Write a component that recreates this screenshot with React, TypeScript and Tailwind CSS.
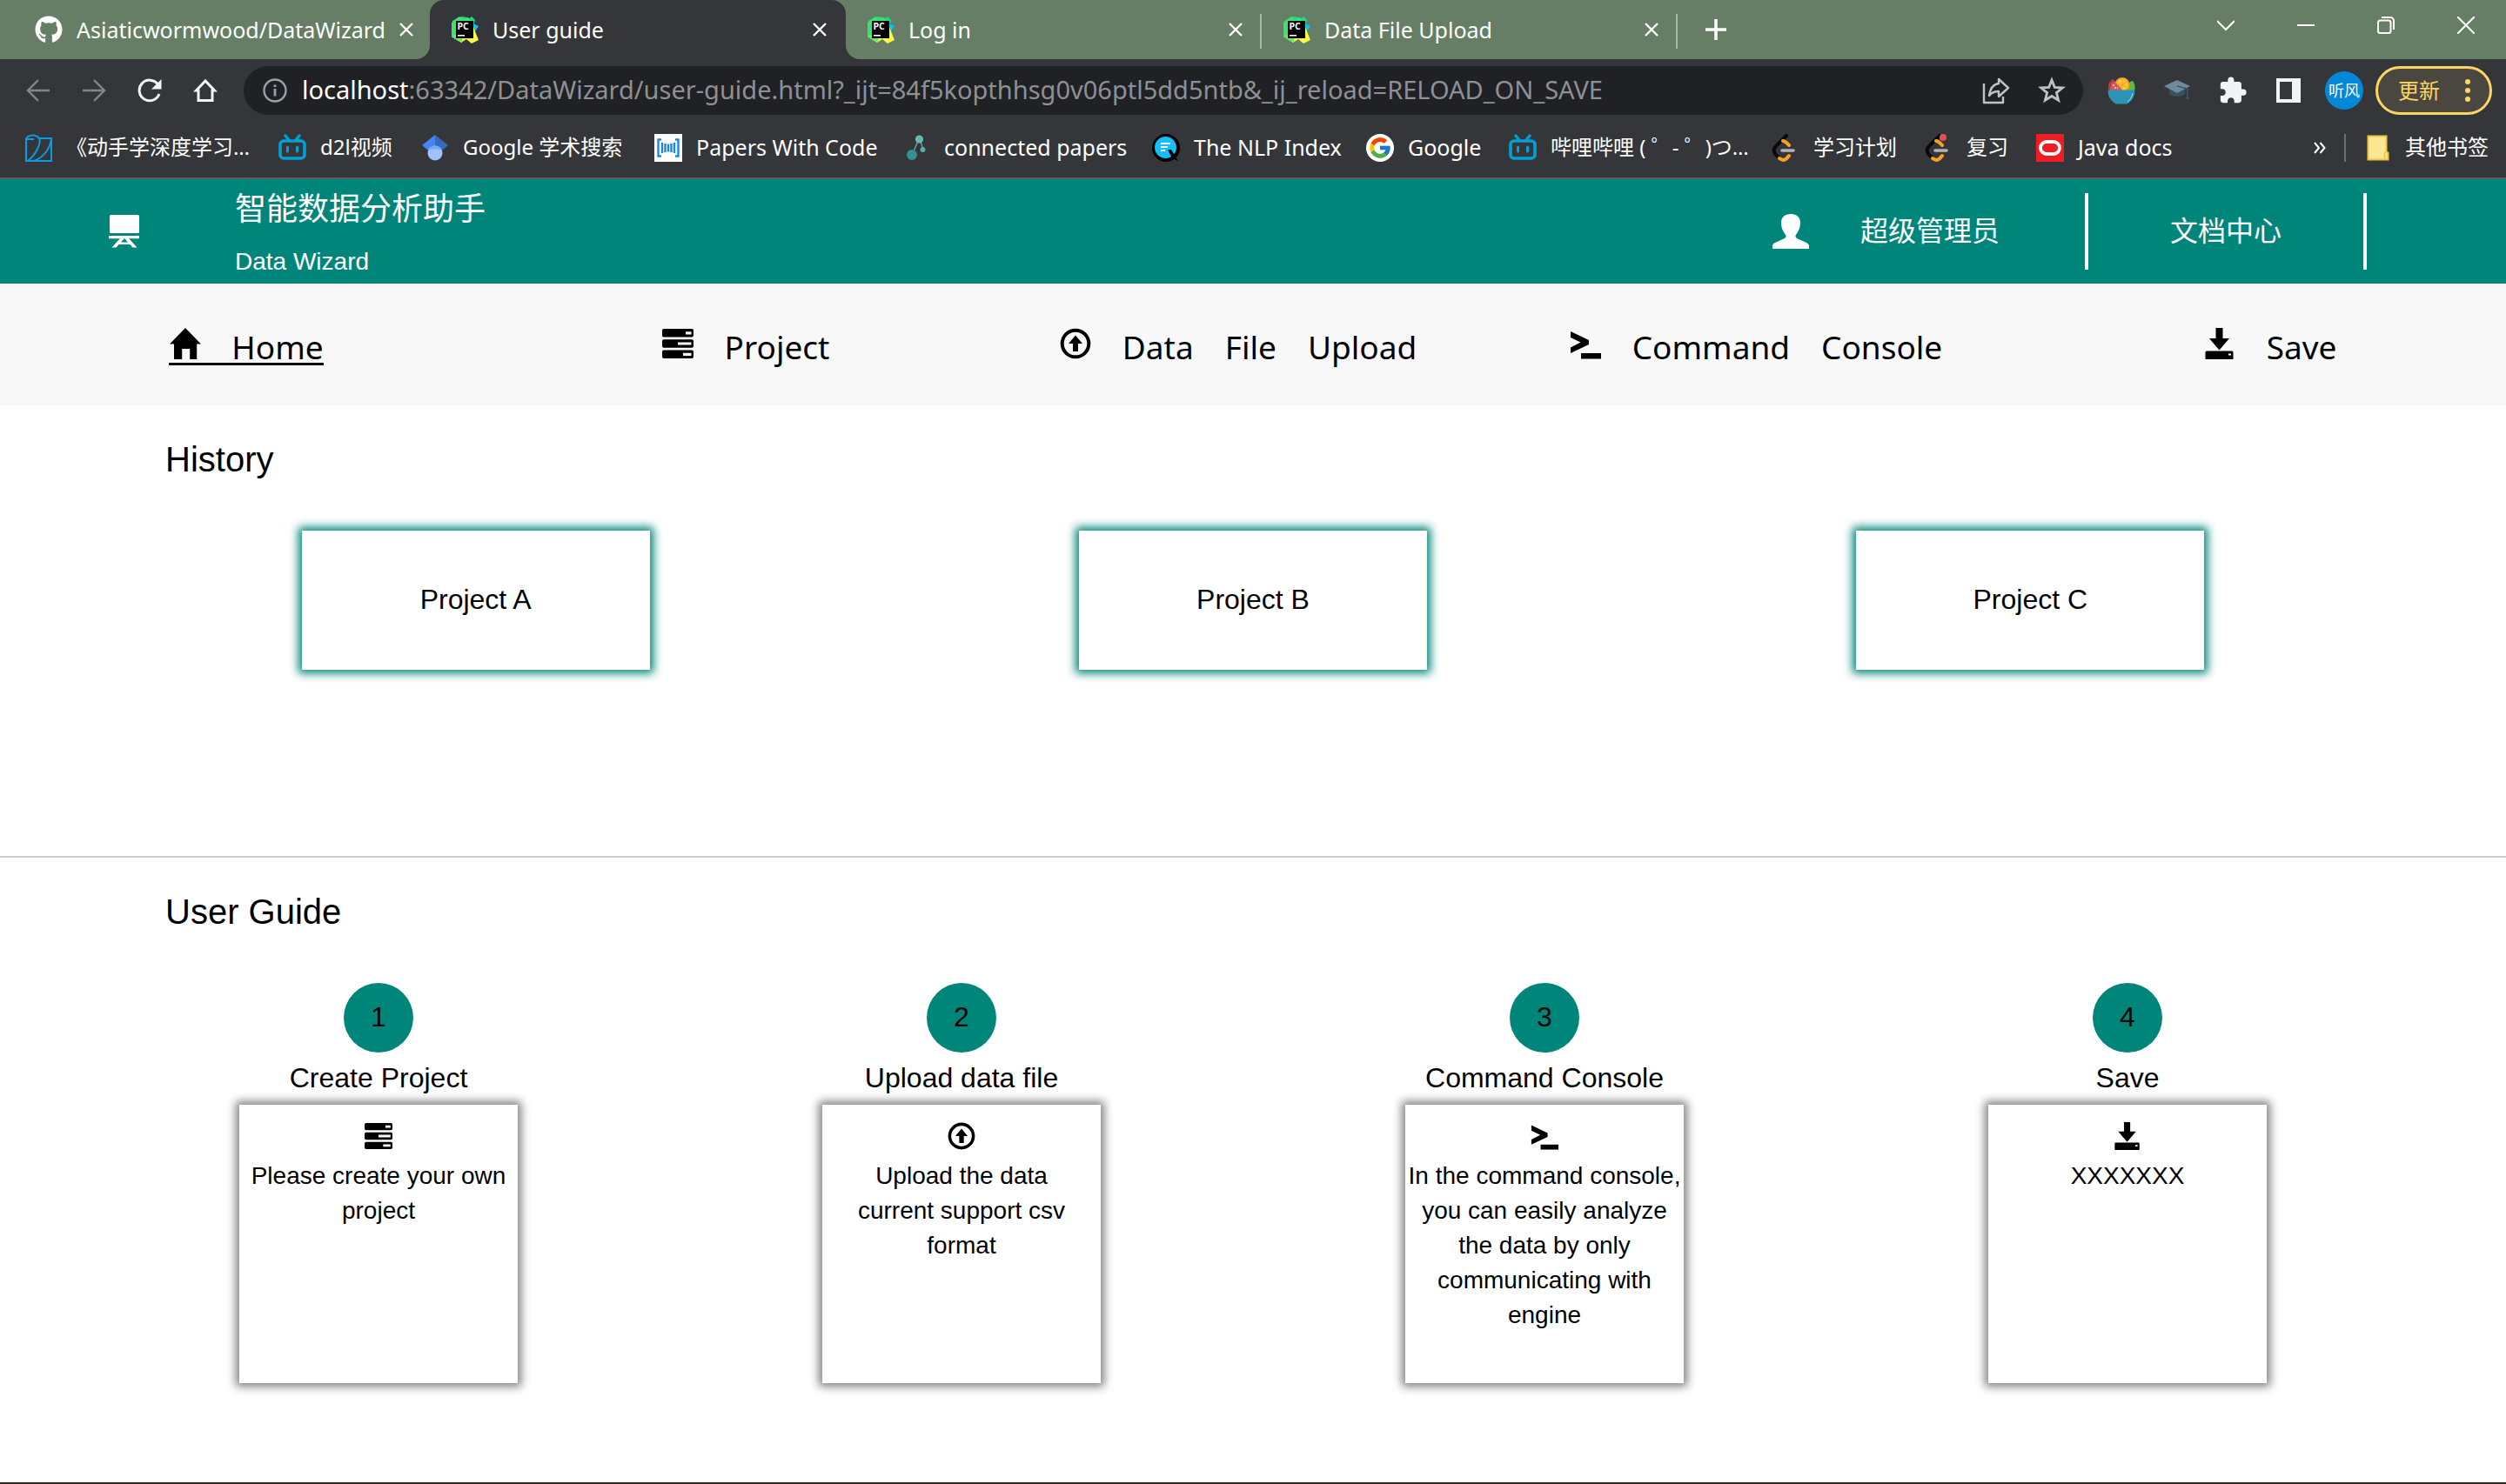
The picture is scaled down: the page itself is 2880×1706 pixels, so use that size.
import type { ReactNode } from "react";
import { FaGithub } from "react-icons/fa";
import { FcGoogle } from "react-icons/fc";
import { MdExtension } from "react-icons/md";

/* ---------- browser icons ---------- */

function PyCharmIcon() {
  return (
    <svg viewBox="0 0 32 32" className="size-8 flex-none" aria-hidden="true">
      <path d="M2 6 9 2l5-1 8 2 2-2 4 4-2 6H8L5 28 1 22z" fill="#21d789" />
      <path d="M1 8 10 1l5 3 5-2 3 4-14 3-3 17-5-1z" fill="#3be26f" />
      <path d="M26 9l6 3-4 6-2-1z" fill="#07c3f2" />
      <path d="M26 13l6 15-8 4-6-5-6 4-7-5 2-4h19z" fill="#fcf84a" />
      <path d="M4 22h10l-1 8-5-1-6-5z" fill="#6bea5b" />
      <path d="M6 6h20v20H6z" fill="#000" />
      <path d="M8 22h8v1.6H8z" fill="#fff" />
      <text x="7.4" y="15.6" fontSize="10.5" fontWeight="700" fontFamily="Open Sans, sans-serif" fill="#fff">
        PC
      </text>
    </svg>
  );
}

function CloseIcon() {
  return (
    <svg viewBox="0 0 16 16" className="size-4" fill="none" stroke="#fff" strokeWidth="2.4" aria-hidden="true">
      <path d="M1 1l14 14M15 1L1 15" />
    </svg>
  );
}

function BilibiliIcon() {
  return (
    <svg viewBox="0 0 32 32" className="size-8 flex-none" fill="none" stroke="#00a1d6" aria-hidden="true">
      <rect x="2" y="8" width="28" height="20" rx="4" strokeWidth="3.6" />
      <path d="M8 2l4 5M24 2l-4 5" strokeWidth="3.4" strokeLinecap="round" />
      <path d="M10.500 15v5M21.500 15v5" strokeWidth="3" strokeLinecap="round" />
    </svg>
  );
}

function BookIcon() {
  return (
    <svg viewBox="0 0 32 32" className="size-8 flex-none" fill="none" stroke="#0a9be0" strokeWidth="2" aria-hidden="true">
      <path d="M2 5v26h4M16 5h15v26H6" />
      <path d="M2 5C5 1 13 0 17 5c3 6-5 20-13 26M31 5C30 16 22 28 10 31M2 6h9" />
    </svg>
  );
}

function ScholarIcon() {
  return (
    <svg viewBox="0 0 32 32" className="size-8 flex-none" aria-hidden="true">
      <path d="M16 1v20L7 18 1 13z" fill="#4285f4" />
      <path d="M16 1l15 12-7 6-8 2z" fill="#356ac3" />
      <circle cx="16" cy="22" r="8.500" fill="#a0c3ff" />
      <path d="M8 19c1-7 15-7 16 0-4-2-12-2-16 0z" fill="#76a7fa" />
    </svg>
  );
}

function PapersIcon() {
  return (
    <svg viewBox="0 0 32 32" className="size-8 flex-none" aria-hidden="true">
      <path d="M0 0h32v32H0z" fill="#fff" />
      <path
        d="M8 6.500H4.500v19H8M24 6.500h3.500v19H24M9 10v12M12.500 11v10M16 11.500v9M19.500 11v10M23 10v12"
        fill="none"
        stroke="#1e86dd"
        strokeWidth="2.400"
      />
    </svg>
  );
}

function ConnectedIcon() {
  return (
    <svg viewBox="0 0 32 32" className="size-8 flex-none" aria-hidden="true">
      <path d="M19 6l-7 16M20 6l4 12" stroke="#5fa3a3" strokeWidth="1.500" />
      <circle cx="19.500" cy="6" r="4.600" fill="#6db5b5" />
      <circle cx="11" cy="24" r="6" fill="#34918f" />
      <circle cx="23.500" cy="18" r="3" fill="#5ba9a9" />
    </svg>
  );
}

function NlpIcon() {
  return (
    <svg viewBox="0 0 32 32" className="size-8 flex-none" aria-hidden="true">
      <circle cx="16" cy="16" r="16" fill="#000" />
      <circle cx="15.500" cy="15.500" r="12.500" fill="#12c1fb" />
      <path d="M10 11h11M10 15h8M10 19h5" stroke="#fff" strokeWidth="2" />
      <path d="M18 18h4l8 13-7-3z" fill="#000" />
    </svg>
  );
}

function GoogleIcon() {
  return (
    <span className="flex size-8 flex-none items-center justify-center rounded-full bg-white">
      <FcGoogle className="size-7" aria-hidden="true" />
    </span>
  );
}

function LeetIcon({ dot = false }: { dot?: boolean }) {
  return (
    <svg viewBox="0 0 32 32" className="size-8 flex-none" fill="none" strokeLinecap="round" aria-hidden="true">
      <path d="M17 2L5 14c-3 3-3 7 0 10l3 3" stroke="#0a0a0a" strokeWidth="4" />
      <path d="M13 8c3 0 4 2 7 5M9 28c5 4 8 1 11-3" stroke="#fea01f" strokeWidth="4" />
      <path d="M12 19h13" stroke="#b3b3b3" strokeWidth="3.600" />
      {dot && <circle cx="21" cy="4" r="4" fill="#d9555a" />}
    </svg>
  );
}

function OracleIcon() {
  return (
    <svg viewBox="0 0 32 32" className="size-8 flex-none" aria-hidden="true">
      <path d="M0 0h32v32H0z" fill="#ee1d23" />
      <rect x="5" y="9" width="22" height="14" rx="7" fill="none" stroke="#fff" strokeWidth="3.800" />
    </svg>
  );
}

function FolderIcon() {
  return (
    <svg viewBox="0 0 26 30" className="h-[30px] w-[26px] flex-none" aria-hidden="true">
      <path d="M1.500 1.500h21v18l2 1v8H1.500z" fill="#ffe694" stroke="#ecc53f" strokeWidth="2" />
      <path d="M20.500 28v-7l2-1.500" fill="none" stroke="#ecc53f" strokeWidth="1.500" />
    </svg>
  );
}

function BowlIcon() {
  return (
    <svg viewBox="0 0 32 32" className="size-8" aria-hidden="true">
      <path d="M1 16C0 9 3 4 6 3c4 3 9 8 12 13z" fill="#b83a3e" />
      <path d="M23 16V9c2-2 4-4 6-4 3 4 3 8 2 11z" fill="#5cb946" />
      <circle cx="17" cy="9.500" r="8.500" fill="#fba51c" />
      <circle cx="17" cy="9.500" r="6.400" fill="#ffc945" />
      <path d="M17 3.500v12M11 8l12 4M22 5l-9 9" stroke="#fba51c" strokeWidth="1.200" />
      <path d="M3 16C3 11 5 7 7 6c4 2 8 6 10 10z" fill="#cf5a5a" />
      <path d="M6 10h2M8 13h2M11 13h1" stroke="#f6d9d2" strokeWidth="1.600" />
      <path d="M.5 15.500h31c0 8-4 13-9 16h-13c-5-3-9-8-9-16z" fill="#2c93b6" />
      <path d="M29 19c-1 5-3 8-6 10" stroke="#a7dbe5" strokeWidth="1" fill="none" />
    </svg>
  );
}

function CapIcon() {
  return (
    <svg viewBox="0 0 32 32" className="size-8" aria-hidden="true">
      <path d="M7 13h18v7c-4 4-14 4-18 0z" fill="#35505f" />
      <path d="M16 4l15 7-15 8L1 11z" fill="#6f8b9b" />
      <path d="M16 11l12 3v8" stroke="#3b5666" strokeWidth="1.600" fill="none" />
      <path d="M28 20l2 6h-4z" fill="#3b5666" />
    </svg>
  );
}

/* ---------- page glyphs ---------- */

type GlyphProps = { className: string };

function BoardGlyph({ className }: GlyphProps) {
  return (
    <svg viewBox="0 0 36 38" className={className} fill="currentColor" aria-hidden="true">
      <rect x="1" y="0" width="34" height="21" rx="1.500" />
      <path d="M0 24h35v3.200H0zM13 27h5l-9.500 10.500H3.500zM18 27h5l9.500 10.500h-5zM9 31.500h18V34H9z" />
    </svg>
  );
}

function UserGlyph({ className }: GlyphProps) {
  return (
    <svg viewBox="0 0 42 40" className={className} fill="currentColor" aria-hidden="true">
      <path d="M21 0c7 0 11 4 11 10 0 7-3 11-5 14-1.500 2 0 3.500 2 4.500l9 4c3 1.500 4 2.500 4 4.500v3H0v-3c0-2 1-3 4-4.500l9-4c2-1 3.500-2.500 2-4.500-2-3-5-7-5-14C10 4 14 0 21 0z" />
    </svg>
  );
}

function HomeGlyph({ className }: GlyphProps) {
  return (
    <svg viewBox="0 0 36 36" className={className} fill="currentColor" aria-hidden="true">
      <path d="M19 0l18 18.500h-4.800V36h-8V24h-9v12H6V18.500H1z" />
    </svg>
  );
}

function TasksGlyph({ className }: GlyphProps) {
  return (
    <svg viewBox="0 0 36 36" className={className} aria-hidden="true">
      <g fill="currentColor">
        <rect x="0" y="1" width="36" height="9.500" rx="2" />
        <rect x="0" y="13.250" width="36" height="9.500" rx="2" />
        <rect x="0" y="25.500" width="36" height="9.500" rx="2" />
      </g>
      <g fill="#f8f8f8">
        <path d="M27 4.200h6.500v3.200H27zM18 16.400h15.500v3.200H18zM24 28.700h9.500v3.200H24z" />
      </g>
    </svg>
  );
}

function UploadGlyph({ className }: GlyphProps) {
  return (
    <svg viewBox="0 0 36 36" className={className} aria-hidden="true">
      <circle cx="18" cy="18" r="15.300" fill="none" stroke="currentColor" strokeWidth="4" />
      <path d="M18 8.500l8 9.500h-5v9h-6v-9h-5z" fill="currentColor" />
    </svg>
  );
}

function ConsoleGlyph({ className }: GlyphProps) {
  return (
    <svg viewBox="0 0 36 36" className={className} aria-hidden="true">
      <path d="M1 4l21 10v5L1 29v-6.500L12.500 16.500 1 11z" fill="currentColor" />
      <path d="M13 29h23v6.500H13z" fill="currentColor" />
    </svg>
  );
}

function SaveGlyph({ className }: GlyphProps) {
  return (
    <svg viewBox="0 0 36 36" className={className} fill="currentColor" aria-hidden="true">
      <path d="M13.500 0h8v12H29L17.500 25.500 6 12h7.500z" />
      <path fillRule="evenodd" d="M3 26.500h29a1.500 1.500 0 0 1 1.500 1.500v8h-32v-8A1.500 1.500 0 0 1 3 26.500zM28 29.500v2h3v-2z" />
    </svg>
  );
}

/* ---------- browser frame ---------- */

type TabProps = { icon: ReactNode; title: string; active?: boolean; divider?: boolean };

function Flare({ side }: { side: "left" | "right" }) {
  return (
    <svg
      viewBox="0 0 16 16"
      className={side === "left" ? "absolute bottom-0 -left-4 size-4" : "absolute -right-4 bottom-0 size-4"}
      aria-hidden="true"
    >
      <path d={side === "left" ? "M16 0v16H0A16 16 0 0 0 16 0z" : "M0 0v16h16A16 16 0 0 1 0 0z"} fill="#35363a" />
    </svg>
  );
}

function Tab({ icon, title, active, divider }: TabProps) {
  return (
    <div
      className={
        active
          ? "relative flex h-full w-[478px] items-center gap-4 rounded-t-2xl bg-[#35363a] pr-[22px] pl-6"
          : "relative flex h-full w-[478px] items-center gap-4 pr-[22px] pl-6"
      }
    >
      {active && <Flare side="left" />}
      {active && <Flare side="right" />}
      {icon}
      <span className="flex-1 text-[25px] leading-8 whitespace-nowrap">{title}</span>
      <button aria-label={`Close ${title}`} className="flex size-4 items-center justify-center">
        <CloseIcon />
      </button>
      {divider && <span className="absolute top-4 right-0 h-10 w-0.5 bg-[#a9b8a8]" />}
    </div>
  );
}

function TabStrip() {
  return (
    <div className="flex h-[68px] items-center bg-[#657e65] text-white">
      <div className="flex h-full w-[494px] items-center pl-4">
        <Tab icon={<FaGithub className="size-8 flex-none" aria-hidden="true" />} title="Asiaticwormwood/DataWizard" />
      </div>
      <Tab icon={<PyCharmIcon />} title="User guide" active />
      <Tab icon={<PyCharmIcon />} title="Log in" divider />
      <Tab icon={<PyCharmIcon />} title="Data File Upload" divider />
      <button aria-label="New tab" className="ml-8 flex size-6 items-center justify-center">
        <svg viewBox="0 0 24 24" className="size-6" stroke="#fff" strokeWidth="3.500" aria-hidden="true">
          <path d="M12 0v24M0 12h24" />
        </svg>
      </button>
      <div className="ml-auto flex h-full items-start text-white">
        <button aria-label="Search tabs" className="flex h-[58px] w-[92px] items-center justify-center">
          <svg viewBox="0 0 20 20" className="size-5" fill="none" stroke="currentColor" strokeWidth="2" aria-hidden="true">
            <path d="M0 5l10 10L20 5" />
          </svg>
        </button>
        <button aria-label="Minimize" className="flex h-[58px] w-[92px] items-center justify-center">
          <span className="h-0.5 w-5 bg-white" />
        </button>
        <button aria-label="Restore" className="flex h-[58px] w-[92px] items-center justify-center">
          <svg viewBox="0 0 20 20" className="size-5" fill="none" stroke="currentColor" strokeWidth="2" aria-hidden="true">
            <rect x="1" y="4.500" width="14.500" height="14.500" rx="2.500" />
            <path d="M5 1h10a4 4 0 0 1 4 4v10" />
          </svg>
        </button>
        <button aria-label="Close window" className="flex h-[58px] w-[92px] items-center justify-center">
          <svg viewBox="0 0 20 20" className="size-5" stroke="currentColor" strokeWidth="2" aria-hidden="true">
            <path d="M0 0l20 20M20 0L0 20" />
          </svg>
        </button>
      </div>
    </div>
  );
}

function ToolButton({ label, children }: { label: string; children: ReactNode }) {
  return (
    <button aria-label={label} className="flex h-14 w-16 flex-none items-center justify-center">
      {children}
    </button>
  );
}

function Toolbar() {
  return (
    <div className="flex h-[72px] items-center bg-[#35363a] pr-4 pl-3">
      <ToolButton label="Back">
        <svg viewBox="0 0 28 28" className="size-7" fill="none" stroke="#84868a" strokeWidth="2.400" aria-hidden="true">
          <path d="M27 14H2M14 2L2 14l12 12" />
        </svg>
      </ToolButton>
      <ToolButton label="Forward">
        <svg viewBox="0 0 28 28" className="size-7" fill="none" stroke="#84868a" strokeWidth="2.400" aria-hidden="true">
          <path d="M1 14h25M14 2l12 12-12 12" />
        </svg>
      </ToolButton>
      <ToolButton label="Reload">
        <svg viewBox="0 0 28 28" className="size-7" aria-hidden="true">
          <path d="M23.500 7A11.800 11.800 0 1 0 25 18" fill="none" stroke="#f1f3f4" strokeWidth="3" />
          <path d="M27.500 1v11.500H16z" fill="#f1f3f4" />
        </svg>
      </ToolButton>
      <ToolButton label="Home">
        <svg viewBox="0 0 28 28" className="size-7" fill="none" stroke="#f1f3f4" strokeWidth="3" aria-hidden="true">
          <path d="M14 3L3.500 14H6v11.500h16V14h2.500z" />
        </svg>
      </ToolButton>
      <div className="ml-3 flex h-14 flex-1 items-center rounded-full bg-[#202124] pr-1 pl-[22px]">
        <svg viewBox="0 0 28 28" className="size-7 flex-none" fill="none" stroke="#9aa0a6" strokeWidth="2.400" aria-hidden="true">
          <circle cx="14" cy="14" r="12.500" />
          <path d="M14 12v8.500M14 7.500v2.500" strokeWidth="2.800" />
        </svg>
        <span className="ml-[17px] flex-1 pb-0.5 text-[29px] leading-10 whitespace-nowrap text-[#8e9094]">
          <span className="text-white">localhost</span>
          :63342/DataWizard/user-guide.html?_ijt=84f5kopthhsg0v06ptl5dd5ntb&amp;_ij_reload=RELOAD_ON_SAVE
        </span>
        <ToolButton label="Share">
          <svg viewBox="0 0 32 32" className="size-8" fill="none" stroke="#c0c2c4" strokeWidth="2.400" strokeLinejoin="round" aria-hidden="true">
            <path d="M2 8v22h22v-7" />
            <path d="M19 3l11 10-11 10v-6c-5 0-8 1-11 5 1-8 4-13 11-14z" />
          </svg>
        </ToolButton>
        <ToolButton label="Bookmark">
          <svg viewBox="0 0 32 32" className="size-8" fill="none" stroke="#c0c2c4" strokeWidth="2.800" aria-hidden="true">
            <path d="M16 4l3.300 8.300 9 .6-6.900 5.700 2.200 8.700-7.600-4.800-7.600 4.800 2.200-8.700-6.900-5.700 9-.6z" />
          </svg>
        </ToolButton>
      </div>
      <div className="ml-3 flex items-center">
        <ToolButton label="Recipe extension">
          <BowlIcon />
        </ToolButton>
        <ToolButton label="Scholar extension">
          <CapIcon />
        </ToolButton>
        <ToolButton label="Extensions">
          <MdExtension className="size-[34px] text-[#f1f3f4]" aria-hidden="true" />
        </ToolButton>
        <ToolButton label="Side panel">
          <svg viewBox="0 0 28 28" className="size-7" aria-hidden="true">
            <path fillRule="evenodd" d="M0 0h28v28H0zM4 4v20h14V4z" fill="#f1f3f4" />
          </svg>
        </ToolButton>
        <ToolButton label="Profile">
          <span className="flex size-11 items-center justify-center rounded-full bg-[#0288d6] text-[18px] leading-none text-white">
            听风
          </span>
        </ToolButton>
        <button className="ml-1 flex h-14 w-[134px] items-center rounded-full border-3 border-[#fdd663] bg-[#49473f] pl-[23px] text-[24px] leading-8 text-[#fdd663]">
          更新
          <svg viewBox="0 0 6 28" className="ml-[29px] h-7 w-1.5" fill="currentColor" aria-hidden="true">
            <circle cx="3" cy="4" r="3" />
            <circle cx="3" cy="14" r="3" />
            <circle cx="3" cy="24" r="3" />
          </svg>
        </button>
      </div>
    </div>
  );
}

const bookmarks = [
  { label: "《动手学深度学习…", icon: <BookIcon />, size: "w-[292px] text-[24px]" },
  { label: "d2l视频", icon: <BilibiliIcon />, size: "w-[164px] text-[24px]" },
  { label: "Google 学术搜索", icon: <ScholarIcon />, size: "w-[268px] text-[24px]" },
  { label: "Papers With Code", icon: <PapersIcon />, size: "w-[285px] text-[25px]" },
  { label: "connected papers", icon: <ConnectedIcon />, size: "w-[287px] text-[25px]" },
  { label: "The NLP Index", icon: <NlpIcon />, size: "w-[246px] text-[25px]" },
  { label: "Google", icon: <GoogleIcon />, size: "w-[164px] text-[25px]" },
  { label: "哔哩哔哩 ( ゜- ゜)つ…", icon: <BilibiliIcon />, size: "w-[302px] text-[24px]" },
  { label: "学习计划", icon: <LeetIcon />, size: "w-[176px] text-[24px]" },
  { label: "复习", icon: <LeetIcon dot />, size: "w-[128px] text-[24px]" },
  { label: "Java docs", icon: <OracleIcon />, size: "w-[200px] text-[25px]" },
];

function BookmarksBar() {
  return (
    <nav
      aria-label="Bookmarks"
      className="flex h-[66px] items-center border-b-2 border-[#5b5e60] bg-[#35363a] pr-5 pl-7 leading-8 text-white"
    >
      {bookmarks.map((b) => (
        <a key={b.label} href="#bookmark" className={`flex flex-none items-center gap-4 pb-1 whitespace-nowrap ${b.size}`}>
          {b.icon}
          <span className="pb-0.5">{b.label}</span>
        </a>
      ))}
      <button aria-label="More bookmarks" className="ml-auto pb-1">
        <svg viewBox="0 0 14 14" className="size-3.5" fill="none" stroke="#fff" strokeWidth="2" aria-hidden="true">
          <path d="M1 1l5 6-5 6M7.500 1l5 6-5 6" />
        </svg>
      </button>
      <span className="mr-6 mb-1 ml-[21px] h-8 w-0.5 bg-[#6a6c70]" />
      <a href="#other" className="flex items-center gap-[18px] pb-1 text-[24px] whitespace-nowrap">
        <FolderIcon />
        <span className="pb-0.5">其他书签</span>
      </a>
    </nav>
  );
}

/* ---------- page ---------- */

function PageHeader() {
  return (
    <header className="flex h-[120px] items-center bg-[#00857b] pr-40 pl-[125px] font-['Liberation_Sans','Noto_Sans_CJK_SC',sans-serif] text-white">
      <BoardGlyph className="h-[38px] w-9" />
      <div className="ml-[109px] flex-1 pt-2.5">
        <h1 className="text-[36px] leading-[60px]">智能数据分析助手</h1>
        <p className="text-[28px] leading-[60px]">Data Wizard</p>
      </div>
      <a href="#account" className="flex h-[88px] items-center gap-[59px] border-r-4 border-white pr-[98px] text-[32px]">
        <UserGlyph className="h-10 w-[42px]" />
        超级管理员
      </a>
      <a href="#docs" className="flex h-[88px] w-80 items-center justify-center border-r-4 border-white text-[32px]">
        文档中心
      </a>
    </header>
  );
}

const navItems = [
  { words: ["Home"], Glyph: HomeGlyph, active: true },
  { words: ["Project"], Glyph: TasksGlyph },
  { words: ["Data", "File", "Upload"], Glyph: UploadGlyph },
  { words: ["Command", "Console"], Glyph: ConsoleGlyph },
  { words: ["Save"], Glyph: SaveGlyph },
];

function MainNav() {
  return (
    <nav className="grid h-[140px] grid-cols-[566fr_582fr_550fr_640fr_542fr] items-center bg-[#f8f8f8] text-[37px] leading-[52px] text-black">
      {navItems.map(({ words, Glyph, active }) => (
        <div key={words[0]} className="flex justify-center">
          <a href={`#${words[0].toLowerCase()}`} className="flex flex-col">
            <span className="flex items-center gap-9">
              <Glyph className="mb-2 size-9 overflow-visible" />
              {words.map((w) => (
                <span key={w}>{w}</span>
              ))}
            </span>
            <span className={active ? "-mt-2 h-[3px] bg-black" : "-mt-2 h-[3px]"} />
          </a>
        </div>
      ))}
    </nav>
  );
}

function HistorySection() {
  return (
    <section className="border-b-2 border-[#cccccc] pt-[34px] pb-[214px]">
      <h2 className="px-[190px] text-[40px] leading-[56px]">History</h2>
      <div className="mt-[54px] grid grid-cols-3 px-[100px]">
        {["Project A", "Project B", "Project C"].map((name) => (
          <div key={name} className="flex justify-center">
            <button className="h-40 w-[400px] bg-white pb-0.5 text-[32px] shadow-[0_0_10px_4px_#00857b]">{name}</button>
          </div>
        ))}
      </div>
    </section>
  );
}

const steps = [
  { title: "Create Project", Glyph: TasksGlyph, text: "Please create your own project" },
  { title: "Upload data file", Glyph: UploadGlyph, text: "Upload the data\ncurrent support csv format" },
  {
    title: "Command Console",
    Glyph: ConsoleGlyph,
    text: "In the command console, you can easily analyze the data by only communicating with engine",
  },
  { title: "Save", Glyph: SaveGlyph, text: "XXXXXXX" },
];

function GuideSection() {
  return (
    <section className="flex-1 pt-[34px]">
      <h2 className="px-[190px] text-[40px] leading-[56px]">User Guide</h2>
      <ol className="mt-[54px] grid grid-cols-4 px-[100px]">
        {steps.map(({ title, Glyph, text }, i) => (
          <li key={title} className="flex flex-col items-center">
            <span className="flex size-20 items-center justify-center rounded-full bg-[#00857b] pb-0.5 text-[32px] leading-9">
              {i + 1}
            </span>
            <h3 className="pb-0.5 text-[32px] leading-[58px]">{title}</h3>
            <div className="flex size-80 flex-col items-center bg-white pt-5 shadow-[0_0_10px_4px_#808080]">
              <Glyph className="size-8 flex-none" />
              <p className="mt-2.5 text-center text-[28px] leading-10 whitespace-pre-line">{text}</p>
            </div>
          </li>
        ))}
      </ol>
    </section>
  );
}

export default function App() {
  return (
    <div className="flex min-h-screen flex-col border-b-2 border-[#2e2a1c] bg-white font-['Noto_Sans','Noto_Sans_CJK_SC',sans-serif] text-black">
      <TabStrip />
      <Toolbar />
      <BookmarksBar />
      <PageHeader />
      <MainNav />
      <main className="flex flex-1 flex-col font-['Liberation_Sans',sans-serif]">
        <HistorySection />
        <GuideSection />
      </main>
    </div>
  );
}
